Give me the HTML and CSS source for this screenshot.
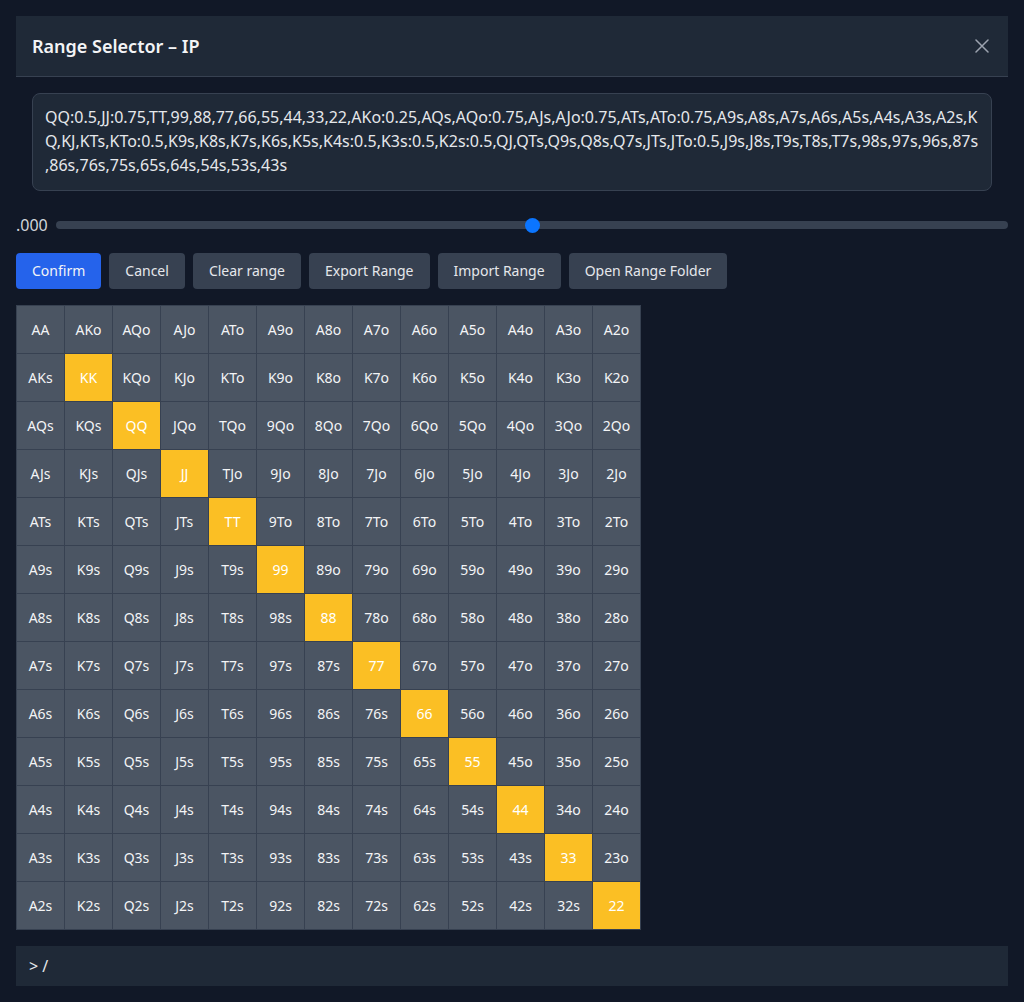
FILE: index.html
```html
<!DOCTYPE html>
<html>
<head>
<meta charset="utf-8">
<title>Range Selector</title>
<link rel="stylesheet" href="styles.css">
</head>
<body>
<div class="modal">
  <div class="header">
    <h1 class="title">Range Selector – IP</h1>
    <button class="close" aria-label="Close">
      <svg width="14" height="14" viewBox="0 0 14 14"><path d="M1 1L13 13M13 1L1 13" stroke="#9ca3af" stroke-width="1.5" stroke-linecap="round" fill="none"/></svg>
    </button>
  </div>
  <div class="body">
    <textarea class="range-text" spellcheck="false">QQ:0.5,JJ:0.75,TT,99,88,77,66,55,44,33,22,AKo:0.25,AQs,AQo:0.75,AJs,AJo:0.75,ATs,ATo:0.75,A9s,A8s,A7s,A6s,A5s,A4s,A3s,A2s,KQ,KJ,KTs,KTo:0.5,K9s,K8s,K7s,K6s,K5s,K4s:0.5,K3s:0.5,K2s:0.5,QJ,QTs,Q9s,Q8s,Q7s,JTs,JTo:0.5,J9s,J8s,T9s,T8s,T7s,98s,97s,96s,87s,86s,76s,75s,65s,64s,54s,53s,43s</textarea>
  </div>
  <div class="slider-row">
    <span class="slider-label">.000</span>
    <input class="slider" type="range" min="0" max="100" value="50">
  </div>
  <div class="actions">
    <button class="btn primary">Confirm</button>
    <button class="btn">Cancel</button>
    <button class="btn">Clear range</button>
    <button class="btn">Export Range</button>
    <button class="btn">Import Range</button>
    <button class="btn">Open Range Folder</button>
  </div>
  <div class="grid">
    <div class="cell">AA</div><div class="cell">AKo</div><div class="cell">AQo</div><div class="cell">AJo</div><div class="cell">ATo</div><div class="cell">A9o</div><div class="cell">A8o</div><div class="cell">A7o</div><div class="cell">A6o</div><div class="cell">A5o</div><div class="cell">A4o</div><div class="cell">A3o</div><div class="cell">A2o</div>
    <div class="cell">AKs</div><div class="cell on">KK</div><div class="cell">KQo</div><div class="cell">KJo</div><div class="cell">KTo</div><div class="cell">K9o</div><div class="cell">K8o</div><div class="cell">K7o</div><div class="cell">K6o</div><div class="cell">K5o</div><div class="cell">K4o</div><div class="cell">K3o</div><div class="cell">K2o</div>
    <div class="cell">AQs</div><div class="cell">KQs</div><div class="cell on">QQ</div><div class="cell">JQo</div><div class="cell">TQo</div><div class="cell">9Qo</div><div class="cell">8Qo</div><div class="cell">7Qo</div><div class="cell">6Qo</div><div class="cell">5Qo</div><div class="cell">4Qo</div><div class="cell">3Qo</div><div class="cell">2Qo</div>
    <div class="cell">AJs</div><div class="cell">KJs</div><div class="cell">QJs</div><div class="cell on">JJ</div><div class="cell">TJo</div><div class="cell">9Jo</div><div class="cell">8Jo</div><div class="cell">7Jo</div><div class="cell">6Jo</div><div class="cell">5Jo</div><div class="cell">4Jo</div><div class="cell">3Jo</div><div class="cell">2Jo</div>
    <div class="cell">ATs</div><div class="cell">KTs</div><div class="cell">QTs</div><div class="cell">JTs</div><div class="cell on">TT</div><div class="cell">9To</div><div class="cell">8To</div><div class="cell">7To</div><div class="cell">6To</div><div class="cell">5To</div><div class="cell">4To</div><div class="cell">3To</div><div class="cell">2To</div>
    <div class="cell">A9s</div><div class="cell">K9s</div><div class="cell">Q9s</div><div class="cell">J9s</div><div class="cell">T9s</div><div class="cell on">99</div><div class="cell">89o</div><div class="cell">79o</div><div class="cell">69o</div><div class="cell">59o</div><div class="cell">49o</div><div class="cell">39o</div><div class="cell">29o</div>
    <div class="cell">A8s</div><div class="cell">K8s</div><div class="cell">Q8s</div><div class="cell">J8s</div><div class="cell">T8s</div><div class="cell">98s</div><div class="cell on">88</div><div class="cell">78o</div><div class="cell">68o</div><div class="cell">58o</div><div class="cell">48o</div><div class="cell">38o</div><div class="cell">28o</div>
    <div class="cell">A7s</div><div class="cell">K7s</div><div class="cell">Q7s</div><div class="cell">J7s</div><div class="cell">T7s</div><div class="cell">97s</div><div class="cell">87s</div><div class="cell on">77</div><div class="cell">67o</div><div class="cell">57o</div><div class="cell">47o</div><div class="cell">37o</div><div class="cell">27o</div>
    <div class="cell">A6s</div><div class="cell">K6s</div><div class="cell">Q6s</div><div class="cell">J6s</div><div class="cell">T6s</div><div class="cell">96s</div><div class="cell">86s</div><div class="cell">76s</div><div class="cell on">66</div><div class="cell">56o</div><div class="cell">46o</div><div class="cell">36o</div><div class="cell">26o</div>
    <div class="cell">A5s</div><div class="cell">K5s</div><div class="cell">Q5s</div><div class="cell">J5s</div><div class="cell">T5s</div><div class="cell">95s</div><div class="cell">85s</div><div class="cell">75s</div><div class="cell">65s</div><div class="cell on">55</div><div class="cell">45o</div><div class="cell">35o</div><div class="cell">25o</div>
    <div class="cell">A4s</div><div class="cell">K4s</div><div class="cell">Q4s</div><div class="cell">J4s</div><div class="cell">T4s</div><div class="cell">94s</div><div class="cell">84s</div><div class="cell">74s</div><div class="cell">64s</div><div class="cell">54s</div><div class="cell on">44</div><div class="cell">34o</div><div class="cell">24o</div>
    <div class="cell">A3s</div><div class="cell">K3s</div><div class="cell">Q3s</div><div class="cell">J3s</div><div class="cell">T3s</div><div class="cell">93s</div><div class="cell">83s</div><div class="cell">73s</div><div class="cell">63s</div><div class="cell">53s</div><div class="cell">43s</div><div class="cell on">33</div><div class="cell">23o</div>
    <div class="cell">A2s</div><div class="cell">K2s</div><div class="cell">Q2s</div><div class="cell">J2s</div><div class="cell">T2s</div><div class="cell">92s</div><div class="cell">82s</div><div class="cell">72s</div><div class="cell">62s</div><div class="cell">52s</div><div class="cell">42s</div><div class="cell">32s</div><div class="cell on">22</div>
  </div>
  <div class="console">&gt; /</div>
</div>
</body>
</html>
```

FILE: styles.css
```css
* { box-sizing: border-box; }

html, body {
  margin: 0;
  background: #111827;
}

body {
  padding: 16px;
  font-family: "Noto Sans", "Open Sans", sans-serif;
  color: #e5e7eb;
}

.header {
  height: 61px;
  background: #1f2937;
  border-bottom: 1px solid #374151;
  display: flex;
  align-items: center;
  justify-content: space-between;
  padding: 0 19px 0 16px;
}

.title {
  margin: 0;
  font-size: 18px;
  font-weight: 600;
  color: #f3f4f6;
}

.close {
  background: none;
  border: 0;
  padding: 0;
  width: 14px;
  height: 14px;
  display: flex;
}

.body {
  padding: 16px 16px 0;
}

.range-text {
  display: block;
  width: 100%;
  height: 98px;
  resize: none;
  background: #1f2937;
  border: 1px solid #374151;
  border-radius: 8px;
  padding: 11px 12px;
  font-family: "Noto Sans", "Open Sans", sans-serif;
  font-size: 16px;
  line-height: 24px;
  color: #e5e7eb;
  overflow: hidden;
  outline: none;
}

.slider-row {
  display: flex;
  align-items: center;
  height: 32px;
  margin-top: 18px;
}

.slider-label {
  font-size: 16px;
  color: #d1d5db;
  width: 40px;
}

.slider {
  -webkit-appearance: none;
  appearance: none;
  flex: 1;
  height: 8px;
  margin: 0;
  background: #374151;
  border-radius: 4px;
  outline: none;
}

.slider::-webkit-slider-thumb {
  -webkit-appearance: none;
  appearance: none;
  width: 15px;
  height: 15px;
  border-radius: 50%;
  background: #0b75ff;
  border: 0;
}

.actions {
  display: flex;
  gap: 8px;
  margin-top: 12px;
}

.btn {
  height: 36px;
  padding: 0 16px 1px;
  border: 0;
  border-radius: 4px;
  background: #374151;
  color: #e5e7eb;
  font-family: "Noto Sans", "Open Sans", sans-serif;
  font-size: 14px;
}

.btn.primary {
  background: #2563eb;
  color: #f3f4f6;
}

.grid {
  margin-top: 16px;
  display: grid;
  grid-template-columns: repeat(13, 47px);
  grid-auto-rows: 47px;
  gap: 1px;
  padding: 1px;
  background: #374151;
  width: max-content;
}

.cell {
  background: #4b5563;
  display: flex;
  align-items: center;
  justify-content: center;
  font-size: 14px;
  color: #f3f4f6;
}

.cell.on {
  background: #fbbf24;
  color: #ffffff;
}

.console {
  margin-top: 16px;
  height: 40px;
  background: #1f2937;
  display: flex;
  align-items: center;
  padding: 0 13px;
  font-size: 16px;
  color: #e5e7eb;
}
```
